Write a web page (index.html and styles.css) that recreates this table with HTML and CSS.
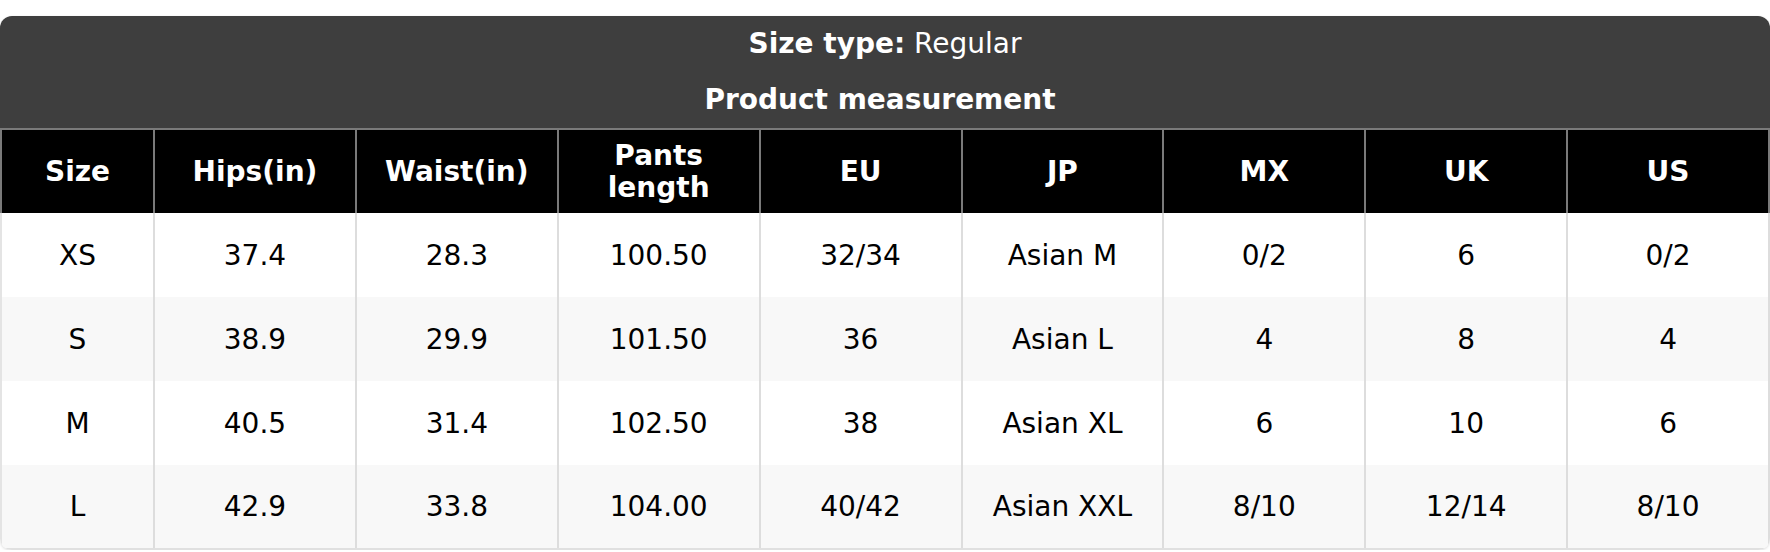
FILE: index.html
```html
<!DOCTYPE html>
<html lang="en">
<head>
<meta charset="utf-8">
<title>Size chart</title>
<link rel="stylesheet" href="styles.css">
</head>
<body>
<div class="chart">
  <div class="chart-title">
    <div class="title-line"><strong>Size type:</strong> Regular</div>
    <div class="title-line title-sub"><strong>Product measurement</strong></div>
  </div>
  <table class="size-table">
    <colgroup>
      <col class="col-first">
      <col><col><col><col><col><col><col><col>
    </colgroup>
    <thead>
      <tr>
        <th>Size</th><th>Hips(in)</th><th>Waist(in)</th><th>Pants length</th><th>EU</th><th>JP</th><th>MX</th><th>UK</th><th>US</th>
      </tr>
    </thead>
    <tbody>
      <tr><td>XS</td><td>37.4</td><td>28.3</td><td>100.50</td><td>32/34</td><td>Asian M</td><td>0/2</td><td>6</td><td>0/2</td></tr>
      <tr><td>S</td><td>38.9</td><td>29.9</td><td>101.50</td><td>36</td><td>Asian L</td><td>4</td><td>8</td><td>4</td></tr>
      <tr><td>M</td><td>40.5</td><td>31.4</td><td>102.50</td><td>38</td><td>Asian XL</td><td>6</td><td>10</td><td>6</td></tr>
      <tr><td>L</td><td>42.9</td><td>33.8</td><td>104.00</td><td>40/42</td><td>Asian XXL</td><td>8/10</td><td>12/14</td><td>8/10</td></tr>
    </tbody>
  </table>
</div>
</body>
</html>
```

FILE: styles.css
```css
html, body {
  margin: 0;
  padding: 0;
  background: #ffffff;
}

body {
  font-family: "DejaVu Sans", Verdana, sans-serif;
  font-size: 28px;
  color: #000000;
  padding-top: 16px;
}

.chart {
  width: 1770px;
  border-radius: 12px;
  overflow: hidden;
  box-shadow: 0 1px 3px rgba(0, 0, 0, 0.14);
  background: #ffffff;
}

.chart-title {
  background: #3e3e3e;
  color: #ffffff;
  text-align: center;
  border-bottom: 2px solid #7a7a7a;
}

.title-line {
  height: 56px;
  line-height: 56px;
}

.title-sub {
  padding-right: 10px;
}

.title-line strong {
  font-weight: bold;
}

.size-table {
  width: 100%;
  border-collapse: collapse;
  table-layout: fixed;
}

.col-first {
  width: 153px;
}

.size-table th {
  background: #000000;
  color: #ffffff;
  font-weight: bold;
  height: 83px;
  line-height: 32px;
  padding: 0 8px;
  text-align: center;
  border-left: 2px solid #7a7a7a;
  box-sizing: border-box;
}

.size-table td {
  height: 84px;
  padding: 0 8px;
  text-align: center;
  border-left: 2px solid #dddddd;
  box-sizing: border-box;
}

.size-table td:last-child {
  border-right: 2px solid #dddddd;
}

.size-table th:last-child {
  border-right: 2px solid #7a7a7a;
}

.size-table td:first-child {
  border-left: 2px solid #e4e4e4;
}

.size-table tbody tr:nth-child(even) td {
  background: #f8f8f8;
}

.size-table tbody tr:last-child td {
  border-bottom: 2px solid #e0e0e0;
}
```
